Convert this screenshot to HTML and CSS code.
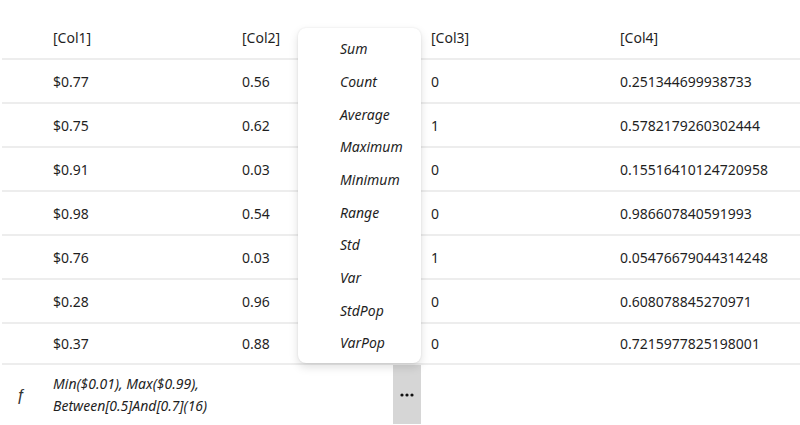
FILE: index.html
```html
<!DOCTYPE html>
<html>
<head>
<meta charset="utf-8">
<link rel="stylesheet" href="styles.css">
</head>
<body>
<div class="table">
  <div class="row header">
    <div class="cell gutter"></div>
    <div class="cell">[Col1]</div>
    <div class="cell">[Col2]</div>
    <div class="cell">[Col3]</div>
    <div class="cell">[Col4]</div>
  </div>
  <div class="row"><div class="cell gutter"></div><div class="cell">$0.77</div><div class="cell">0.56</div><div class="cell">0</div><div class="cell">0.251344699938733</div></div>
  <div class="row"><div class="cell gutter"></div><div class="cell">$0.75</div><div class="cell">0.62</div><div class="cell">1</div><div class="cell">0.5782179260302444</div></div>
  <div class="row"><div class="cell gutter"></div><div class="cell">$0.91</div><div class="cell">0.03</div><div class="cell">0</div><div class="cell">0.15516410124720958</div></div>
  <div class="row"><div class="cell gutter"></div><div class="cell">$0.98</div><div class="cell">0.54</div><div class="cell">0</div><div class="cell">0.986607840591993</div></div>
  <div class="row"><div class="cell gutter"></div><div class="cell">$0.76</div><div class="cell">0.03</div><div class="cell">1</div><div class="cell">0.05476679044314248</div></div>
  <div class="row"><div class="cell gutter"></div><div class="cell">$0.28</div><div class="cell">0.96</div><div class="cell">0</div><div class="cell">0.608078845270971</div></div>
  <div class="row last"><div class="cell gutter"></div><div class="cell">$0.37</div><div class="cell">0.88</div><div class="cell">0</div><div class="cell">0.7215977825198001</div></div>
  <div class="row footer">
    <div class="cell gutter fx">ƒ</div>
    <div class="cell summary">Min($0.01), Max($0.99),<br>Between[0.5]And[0.7](16)</div>
    <div class="cell menu-host">
      <div class="menu">
        <div class="item">Sum</div>
        <div class="item">Count</div>
        <div class="item">Average</div>
        <div class="item">Maximum</div>
        <div class="item">Minimum</div>
        <div class="item">Range</div>
        <div class="item">Std</div>
        <div class="item">Var</div>
        <div class="item">StdPop</div>
        <div class="item">VarPop</div>
      </div>
      <div class="more"><svg width="14" height="4" viewBox="0 0 14 4"><circle cx="2" cy="2" r="1.6" fill="#111"/><circle cx="7" cy="2" r="1.6" fill="#111"/><circle cx="12" cy="2" r="1.6" fill="#111"/></svg></div>
    </div>
    <div class="cell"></div>
    <div class="cell"></div>
  </div>
</div>
</body>
</html>
```

FILE: styles.css
```css
html, body {
  margin: 0;
  padding: 0;
  background: #ffffff;
}
body {
  font-family: "Noto Sans", "Open Sans", sans-serif;
  font-size: 14px;
  color: #1f1f1f;
  width: 800px;
  height: 425px;
  overflow: hidden;
}
.table {
  padding-top: 16px;
  padding-left: 2px;
}
.row {
  display: grid;
  grid-template-columns: 39px 189px 189px 189px 1fr;
  height: 42px;
  border-bottom: 2px solid #ededed;
  align-items: center;
}
.row.last {
  height: 39px;
}
.cell {
  padding-left: 12px;
  white-space: nowrap;
}
.cell.gutter {
  padding-left: 0;
}
.footer {
  height: 61px;
  border-bottom: none;
  align-items: stretch;
}
.cell.fx {
  display: flex;
  align-items: center;
  padding-left: 14px;
  font-family: "Liberation Sans", sans-serif;
  font-style: italic;
  font-size: 16px;
  color: #333;
}
.summary {
  font-style: italic;
  line-height: 22px;
  padding-top: 8px;
}
.menu-host {
  position: relative;
  display: flex;
  justify-content: flex-end;
  align-items: flex-start;
}
.more {
  width: 28px;
  height: 59px;
  margin-right: -2px;
  background: #d6d6d6;
  display: flex;
  align-items: center;
  justify-content: center;
}
.more svg {
  display: block;
}
.menu {
  position: absolute;
  right: -2px;
  bottom: calc(100% + 2px);
  width: 123px;
  box-sizing: border-box;
  padding: 5px 0 3px 42px;
  background: #ffffff;
  border-radius: 8px;
  box-shadow: 0 0 2px rgba(0,0,0,0.10), 0 4px 10px rgba(0,0,0,0.13);
  font-style: italic;
}
.item {
  height: 32.7px;
  line-height: 32.7px;
}
```
